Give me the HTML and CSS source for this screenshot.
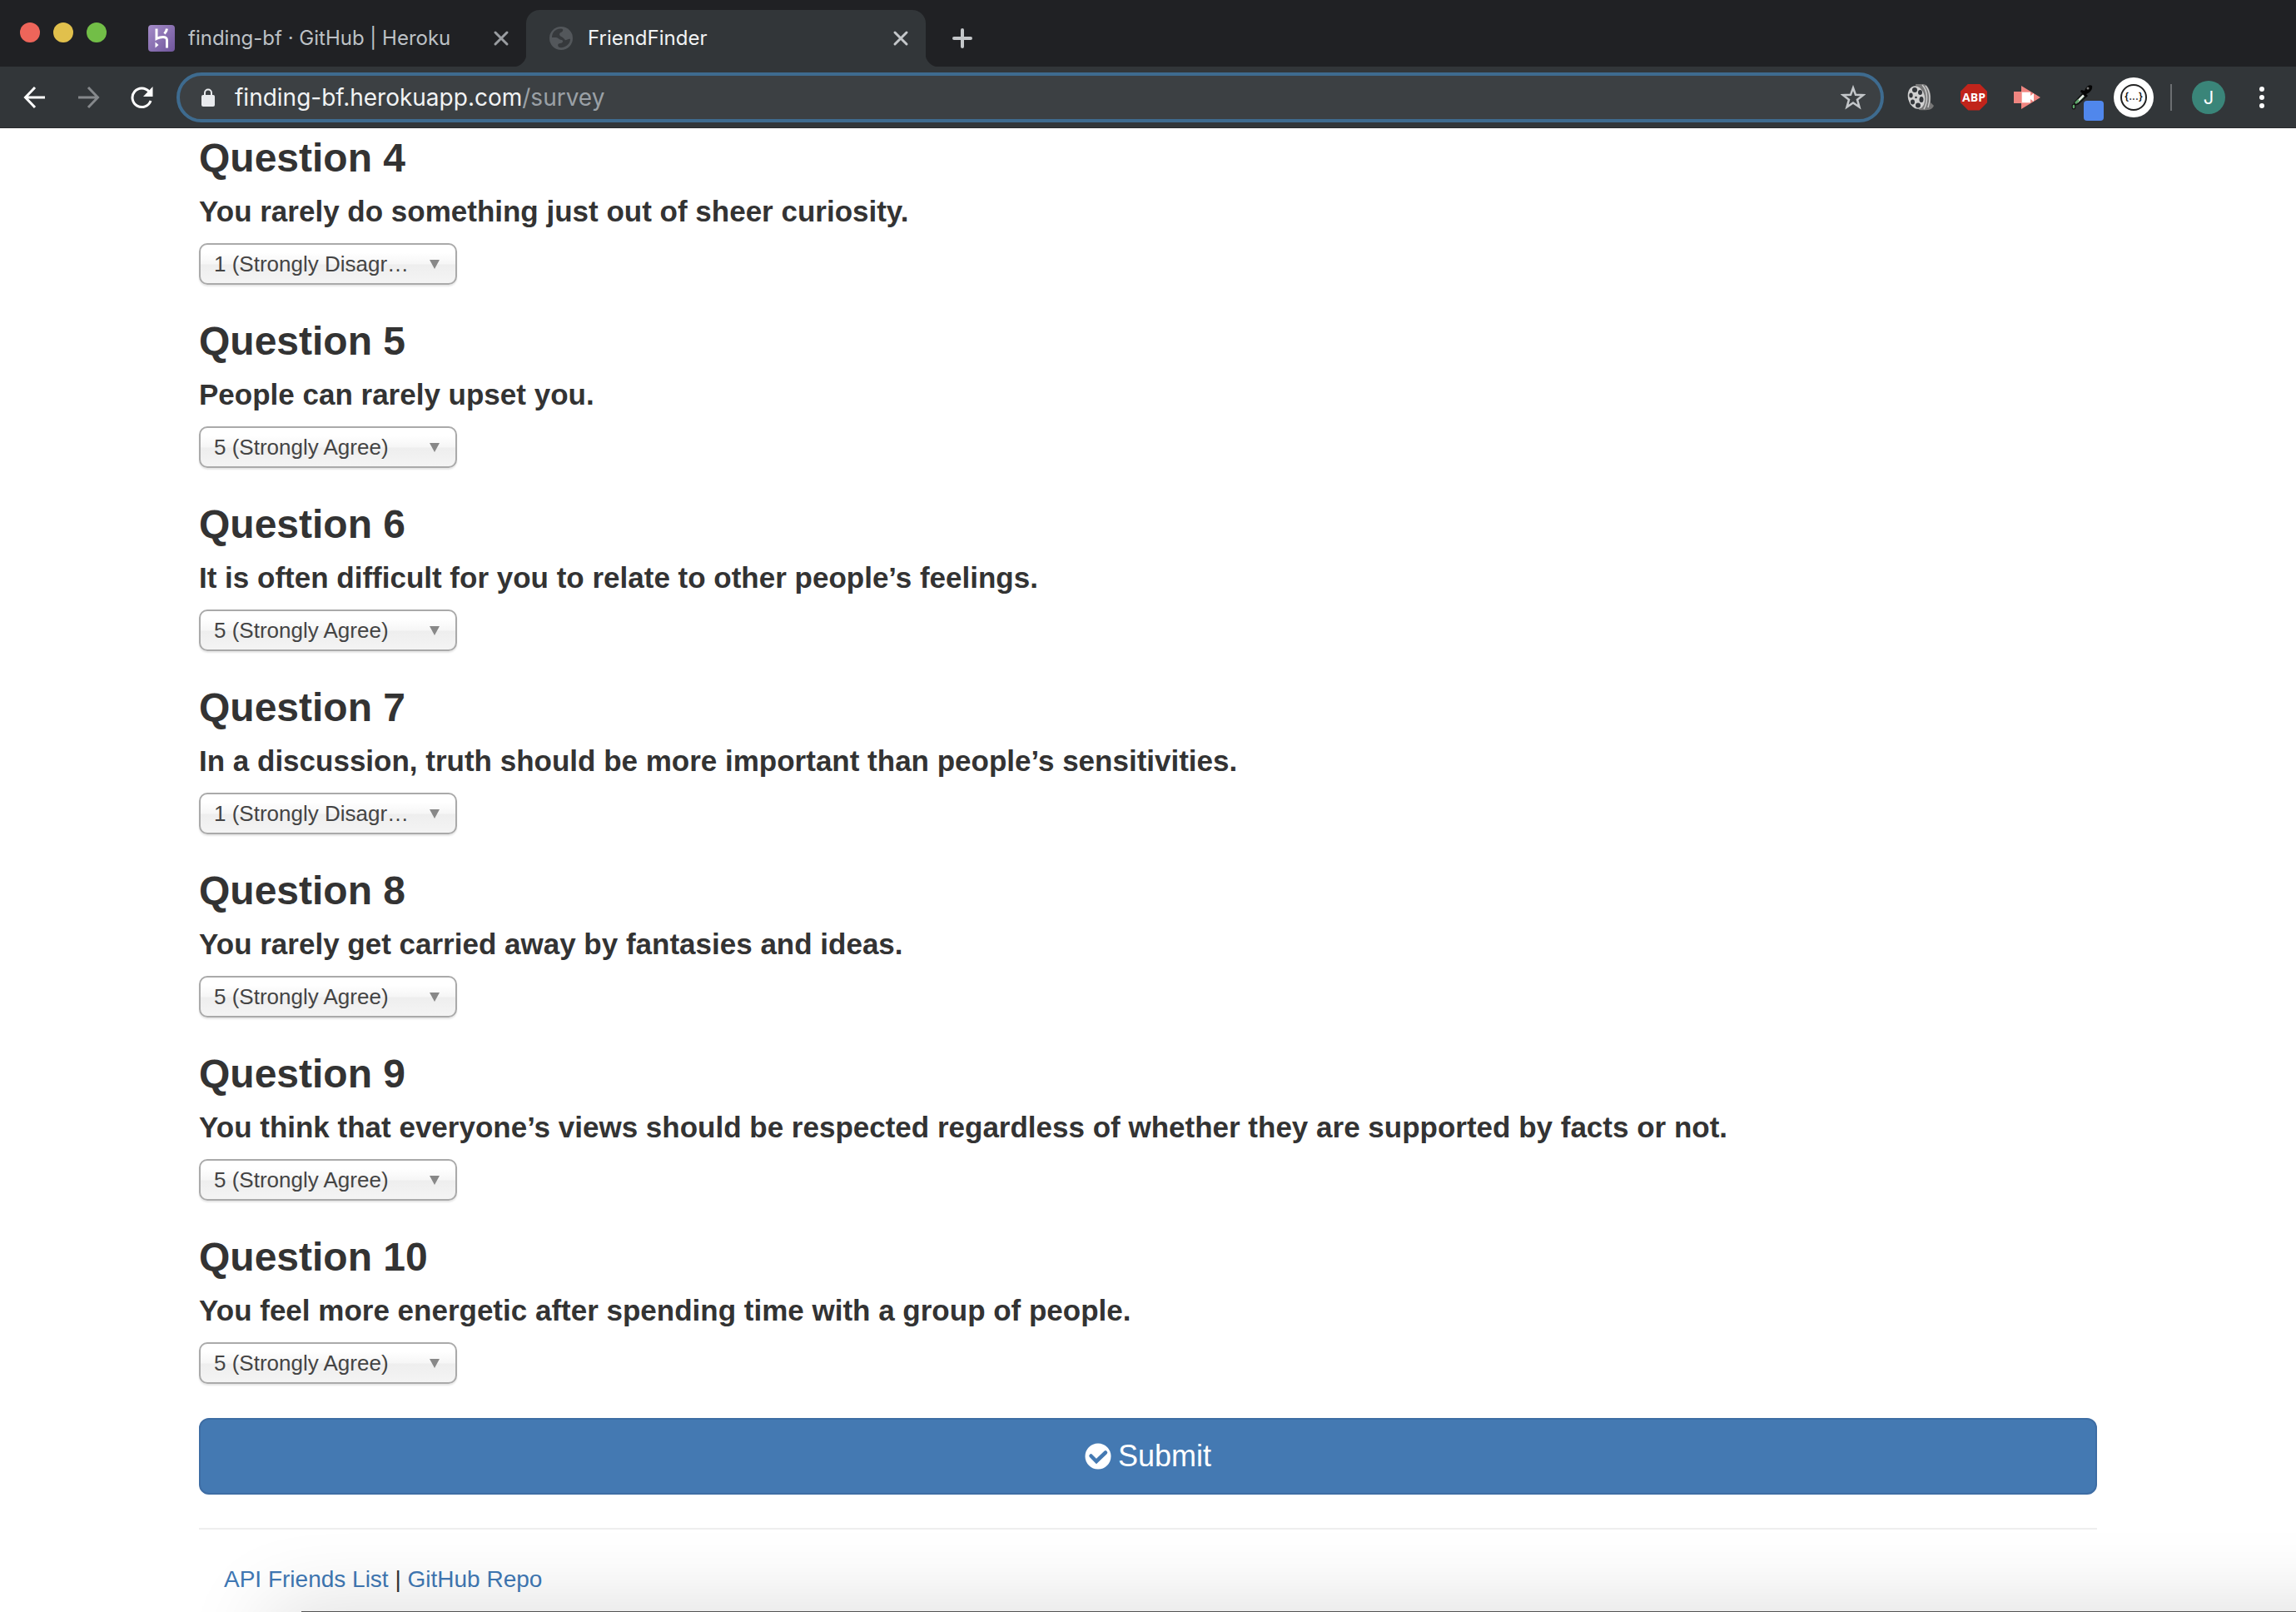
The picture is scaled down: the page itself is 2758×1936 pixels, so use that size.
FILE: index.html
```html
<!DOCTYPE html>
<html lang="en">
<head>
<meta charset="utf-8">
<title>FriendFinder</title>
<link rel="stylesheet" href="styles.css">
</head>
<body>
<div class="window">
  <header class="browser">
    <div class="tabstrip">
      <div class="lights">
        <button class="light light-close" aria-label="Close window"></button>
        <button class="light light-min" aria-label="Minimise window"></button>
        <button class="light light-max" aria-label="Maximise window"></button>
      </div>
      <div class="tab">
        <svg class="favicon" viewBox="0 0 32 32"><defs><linearGradient id="hk" x1="0" y1="0" x2="1" y2="1"><stop offset="0" stop-color="#a48cc8"/><stop offset="1" stop-color="#70569c"/></linearGradient></defs><rect width="32" height="32" rx="4" fill="url(#hk)"/><path d="M10 4.500V16.500C14 14.500 22.500 12.500 22.500 18V27.500M22.500 4.500C22.200 6.800 21 8.800 19.500 10.500" fill="none" stroke="#fff" stroke-width="3"/><path d="M8.500 20.500L12.500 24L8.500 27.500z" fill="#fff"/></svg>
        <span class="tab-title">finding-bf · GitHub | Heroku</span>
        <button class="icon-button tab-close" aria-label="Close tab"><svg width="20" height="20" viewBox="0 0 20 20"><path d="M3 3L17 17M17 3L3 17" stroke="currentColor" stroke-width="3" stroke-linecap="round"/></svg></button>
      </div>
      <div class="tab tab-active">
        <svg class="favicon" viewBox="0 0 32 32"><circle cx="16" cy="16" r="14" fill="#53575b"/><path d="M18 5C10 3 5 9 5 15H10C13 15 13 18 17 18C19 19 18 22 15 22C12 22 11 25 14 27C21 28 27 23 27 17C24 16 22 20 20 17C18 14 14 14 14 11C15 8 19 9 18 5z" fill="#36393c"/></svg>
        <span class="tab-title">FriendFinder</span>
        <button class="icon-button tab-close" aria-label="Close tab"><svg width="20" height="20" viewBox="0 0 20 20"><path d="M3 3L17 17M17 3L3 17" stroke="currentColor" stroke-width="3" stroke-linecap="round"/></svg></button>
      </div>
      <button class="icon-button new-tab" aria-label="New tab"><svg width="24" height="24" viewBox="0 0 24 24"><path d="M12 2V22M2 12H22" stroke="currentColor" stroke-width="4" stroke-linecap="round"/></svg></button>
    </div>
    <div class="toolbar">
      <nav class="history">
        <button class="icon-button" aria-label="Back"><svg width="28" height="28" viewBox="0 0 28 28"><path d="M26 14H3M14 2L2.500 14L14 26" fill="none" stroke="#fff" stroke-width="3"/></svg></button>
        <button class="icon-button" aria-label="Forward"><svg width="28" height="28" viewBox="0 0 28 28"><path d="M2 14H25M14 2L25.500 14L14 26" fill="none" stroke="#85888b" stroke-width="3"/></svg></button>
        <button class="icon-button" aria-label="Reload"><svg width="28" height="28" viewBox="0 0 28 28"><path d="M23 7A11.300 11.300 0 1 0 25 18" fill="none" stroke="#fff" stroke-width="3"/><path d="M27.500 1V13H16z" fill="#fff"/></svg></button>
      </nav>
      <div class="omnibox">
        <svg class="lock" width="16" height="22" viewBox="0 0 16 22"><rect y="8" width="16" height="14" rx="2" fill="#e8eaed"/><path d="M4 9V5.500A4 4 0 0 1 12 5.500V9" fill="none" stroke="#e8eaed" stroke-width="2"/></svg>
        <a class="address" href="#survey"><span class="host">finding-bf.herokuapp.com</span>/survey</a>
        <button class="icon-button" aria-label="Bookmark this page"><svg width="30" height="30" viewBox="0 0 30 30"><path d="M15 3.500L18 11.800L27 12.200L20 17.700L22.500 26.500L15 21.500L7.500 26.500L10 17.700L3 12.200L12 11.800z" fill="none" stroke="#c4c7ca" stroke-width="2.500"/></svg></button>
      </div>
      <div class="extensions">
        <button class="icon-button ext" aria-label="Film reel"><svg width="32" height="32" viewBox="0 0 32 32"><path d="M10 0H20C27 2 29 12 28 22L32 26C30 31 24 32 14 31z" fill="#777"/><path d="M18 1C25 8 25 22 20 30M22 2C28 9 28 20 25 28" fill="none" stroke="#ccc" stroke-width="1.500"/><ellipse cx="11" cy="16" rx="10" ry="14" transform="rotate(-14 11 16)" fill="#d0d0d0"/><g fill="#33363a"><ellipse cx="9" cy="7" rx="3" ry="3"/><ellipse cx="15.500" cy="10" rx="2.500" ry="3"/><ellipse cx="17" cy="18.500" rx="2.500" ry="3.500"/><ellipse cx="13" cy="25.500" rx="3" ry="3"/><ellipse cx="6.500" cy="21.500" rx="2.500" ry="3"/><ellipse cx="4.500" cy="13.500" rx="2.200" ry="3"/><circle cx="10.500" cy="16" r="1.300"/></g></svg></button>
        <button class="icon-button ext abp" aria-label="Adblock Plus">ABP</button>
        <button class="icon-button ext" aria-label="Video capture"><svg width="32" height="28" viewBox="0 0 32 28"><path d="M0 7H9V0L32 14L9 28V21H0z" fill="#ef8580"/><path d="M9 7L20 7V21H9z" fill="#f6aba7"/><path d="M10 8H20V12L24 9V19L20 16V20H10z" fill="#fff"/></svg></button>
        <button class="icon-button ext picker" aria-label="Colour picker"><svg width="40" height="58" viewBox="0 0 40 58"><g transform="translate(0 13)"><path d="M4 22L13 12L17 16L8 24L4 25z" fill="#263d2a" stroke="#111" stroke-width="1.500"/><path d="M7 21.500L15 13.500" stroke="#e8efe8" stroke-width="2.500"/><path d="M5 23L9 19" stroke="#5ea86b" stroke-width="2.500"/><path d="M12 7L16 8C18 2 22 0 25 2C26 6 23 10 18 12L20 14L18 16L11 9z" fill="#050505"/><circle cx="20" cy="5" r="1.500" fill="#777"/><ellipse cx="3" cy="27" rx="2.500" ry="3.500" fill="#151515"/><ellipse cx="3" cy="27" rx="1.300" ry="2.200" fill="#5ea86b"/></g><rect x="15" y="33" width="24" height="24" rx="4" fill="#5087ec"/></svg></button>
        <button class="icon-button ext json" aria-label="JSON viewer"><span class="json-ring">{...}</span></button>
      </div>
      <span class="divider"></span>
      <button class="icon-button avatar" aria-label="Profile">J</button>
      <button class="icon-button menu" aria-label="Menu"><svg width="6" height="28" viewBox="0 0 6 28"><g fill="#fff"><circle cx="3" cy="4" r="3"/><circle cx="3" cy="14" r="3"/><circle cx="3" cy="24" r="3"/></g></svg></button>
    </div>
  </header>

  <main class="page">
    <form class="survey">
      <section class="question">
        <h3>Question 4</h3>
        <h4><label for="q4">You rarely do something just out of sheer curiosity.</label></h4>
        <div class="chosen"><select id="q4"><option selected>1 (Strongly Disagree)</option><option>2</option><option>3</option><option>4</option><option>5 (Strongly Agree)</option></select></div>
      </section>
      <section class="question">
        <h3>Question 5</h3>
        <h4><label for="q5">People can rarely upset you.</label></h4>
        <div class="chosen"><select id="q5"><option>1 (Strongly Disagree)</option><option>2</option><option>3</option><option>4</option><option selected>5 (Strongly Agree)</option></select></div>
      </section>
      <section class="question">
        <h3>Question 6</h3>
        <h4><label for="q6">It is often difficult for you to relate to other people’s feelings.</label></h4>
        <div class="chosen"><select id="q6"><option>1 (Strongly Disagree)</option><option>2</option><option>3</option><option>4</option><option selected>5 (Strongly Agree)</option></select></div>
      </section>
      <section class="question">
        <h3>Question 7</h3>
        <h4><label for="q7">In a discussion, truth should be more important than people’s sensitivities.</label></h4>
        <div class="chosen"><select id="q7"><option selected>1 (Strongly Disagree)</option><option>2</option><option>3</option><option>4</option><option>5 (Strongly Agree)</option></select></div>
      </section>
      <section class="question">
        <h3>Question 8</h3>
        <h4><label for="q8">You rarely get carried away by fantasies and ideas.</label></h4>
        <div class="chosen"><select id="q8"><option>1 (Strongly Disagree)</option><option>2</option><option>3</option><option>4</option><option selected>5 (Strongly Agree)</option></select></div>
      </section>
      <section class="question">
        <h3>Question 9</h3>
        <h4><label for="q9">You think that everyone’s views should be respected regardless of whether they are supported by facts or not.</label></h4>
        <div class="chosen"><select id="q9"><option>1 (Strongly Disagree)</option><option>2</option><option>3</option><option>4</option><option selected>5 (Strongly Agree)</option></select></div>
      </section>
      <section class="question">
        <h3>Question 10</h3>
        <h4><label for="q10">You feel more energetic after spending time with a group of people.</label></h4>
        <div class="chosen"><select id="q10"><option>1 (Strongly Disagree)</option><option>2</option><option>3</option><option>4</option><option selected>5 (Strongly Agree)</option></select></div>
      </section>
      <button class="submit" type="button"><svg width="32" height="32" viewBox="0 0 32 32"><circle cx="16" cy="16" r="15.500" fill="#fff"/><path d="M7.500 15.500L14 22L25 11.500" fill="none" stroke="#4479b2" stroke-width="4.500" stroke-linecap="round"/></svg>Submit</button>
    </form>
    <hr>
    <footer class="footer"><a href="#friends">API Friends List</a> | <a href="#repo">GitHub Repo</a></footer>
  </main>
  <div class="dock-shadow"></div>
</div>
</body>
</html>
```
FILE: styles.css
```css
* { box-sizing: border-box; }
body { margin: 0; background: #fff; color: #333; font-family: "Liberation Sans", Arial, sans-serif; font-size: 28px; line-height: 40px; }
button { font: inherit; border: 0; padding: 0; background: none; cursor: pointer; }
.window { position: relative; height: 100vh; overflow: hidden; }

/* Browser chrome */
.browser { font-family: Inter, Roboto, sans-serif; color: #e8eaed; }
.tabstrip { display: flex; align-items: flex-end; height: 80px; background: #202124; }
.lights { display: flex; align-self: flex-start; gap: 16px; padding: 27px 24px 0 24px; }
.light { width: 24px; height: 24px; border-radius: 50%; }
.light-close { background: #ed655a; }
.light-min { background: #e1c04c; }
.light-max { background: #72be47; }
.tab { position: relative; display: flex; align-items: center; gap: 16px; width: 480px; height: 68px; padding: 0 20px 0 26px; font-size: 24px; line-height: 28px; color: #bdc1c6; }
.tab-active { background: #323639; border-radius: 16px 16px 0 0; color: #f1f3f4; }
.tab-active::before, .tab-active::after { content: ""; position: absolute; bottom: 0; width: 16px; height: 16px; }
.tab-active::before { right: 100%; background: radial-gradient(circle at 0 0, #202124 16px, #323639 17px); }
.tab-active::after { left: 100%; background: radial-gradient(circle at 100% 0, #202124 16px, #323639 17px); }
.favicon { width: 32px; height: 32px; flex: none; }
.tab-title { flex: 1; white-space: nowrap; }
.icon-button { display: flex; align-items: center; justify-content: center; flex: none; }
.tab-close { color: #9a9da1; }
.tab-active .tab-close { color: #c4c7ca; }
.new-tab { height: 68px; padding: 0 0 0 32px; color: #c4c7ca; }
.toolbar { display: flex; align-items: center; height: 74px; padding: 0 38px 0 28px; background: #323639; border-bottom: 1px solid #282a2d; }
.history { display: flex; gap: 36px; margin-right: 28px; }
.omnibox { display: flex; align-items: center; flex: 1; height: 60px; padding: 0 18px 0 26px; border: 4px solid #3e6b8f; border-radius: 30px; background: #3c4043; }
.lock { flex: none; margin-right: 24px; }
.address { flex: 1; color: #9aa0a6; text-decoration: none; font-size: 28px; line-height: 36px; }
.host { color: #f1f3f4; }
.extensions { display: flex; align-items: center; gap: 32px; margin-left: 28px; }
.ext { width: 32px; height: 48px; }
.abp { height: 32px; background: #c1241b; color: #fff; font-family: "Open Sans", sans-serif; font-size: 14px; font-weight: 700; clip-path: polygon(29% 0, 71% 0, 100% 29%, 100% 71%, 71% 100%, 29% 100%, 0 71%, 0 29%); }
.picker { width: 40px; margin-left: 5px; }
.json { width: 48px; border-radius: 50%; background: #fff; color: #111; margin-left: -21px; }
.json-ring { width: 32px; height: 32px; border: 2px solid #222; border-radius: 50%; font-size: 12px; font-weight: 600; line-height: 26px; }
.divider { width: 2px; height: 32px; margin: 0 24px 0 20px; background: #6c6f72; }
.avatar { width: 40px; height: 40px; border-radius: 50%; background: #3a8579; color: #fff; font-size: 22px; }
.menu { margin-left: 41px; }

/* Survey */
.page { max-width: 2340px; margin: 0 auto; padding: 9px 30px 0; }
.survey { display: flex; flex-direction: column; gap: 41px; }
h3, h4 { margin: 0; }
h3 { font-size: 48px; font-weight: 700; line-height: 54px; }
h4 { margin: 17px 0 18px; font-size: 35px; font-weight: 700; line-height: 40px; }
.chosen { position: relative; width: 310px; height: 50px; }
.chosen::after { content: ""; position: absolute; top: 20px; right: 21px; border: 6px solid transparent; border-top: 11px solid #888; border-bottom: 0; pointer-events: none; }
.chosen select { appearance: none; width: 100%; height: 100%; margin: 0; padding: 0 50px 0 16px; border: 2px solid #aaa; border-radius: 10px; background: linear-gradient(#fff 20%, #f6f6f6 50%, #eee 52%, #f4f4f4 100%); box-shadow: 0 2px 2px rgba(0, 0, 0, .1); color: #444; font: 26px/46px "Liberation Sans", Arial, sans-serif; text-overflow: ellipsis; white-space: nowrap; overflow: hidden; }
.submit { display: flex; align-items: center; justify-content: center; gap: 8px; height: 92px; border: 2px solid #3e6da4; border-radius: 12px; background: #4479b2; color: #fff; font-size: 36px; line-height: 48px; }
hr { margin: 40px 0; border: 0; border-top: 2px solid #eee; }
.footer { padding: 0 30px; }
.footer a { color: #4078b4; text-decoration: none; }

/* Shadow cast by the dock along the lower edge */
.dock-shadow { position: absolute; left: 362px; right: -200px; bottom: 0; height: 1px; background: #555; box-shadow: 0 40px 100px 40px rgba(0, 0, 0, .16); pointer-events: none; }
```
